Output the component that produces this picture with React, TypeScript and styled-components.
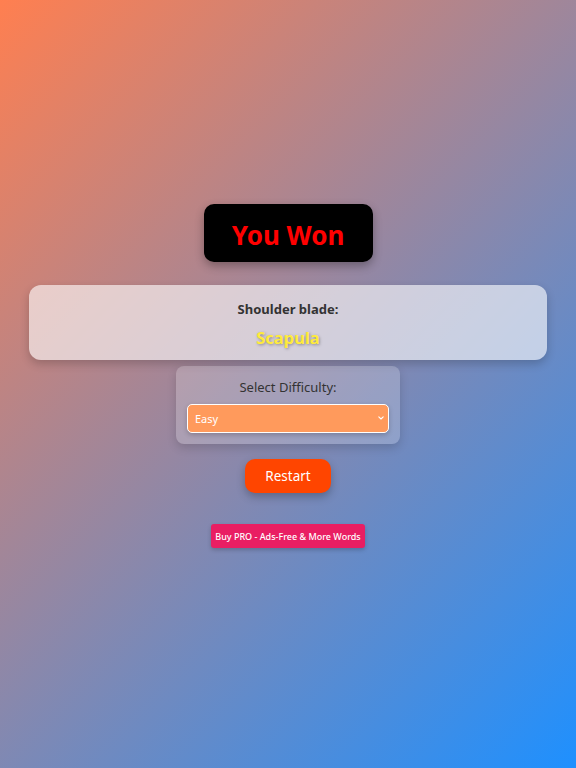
import React, { useState } from 'react';
import styled, { createGlobalStyle } from 'styled-components';

const GlobalStyle = createGlobalStyle`
  html, body {
    margin: 0;
    padding: 0;
  }
  body {
    font-family: "Noto Sans", "Open Sans", sans-serif;
    background: linear-gradient(135deg, #ff7f50 0%, #1e90ff 100%);
    min-height: 100vh;
  }
`;

const Page = styled.div`
  min-height: 100vh;
  display: flex;
  flex-direction: column;
  align-items: center;
  justify-content: center;
  padding-bottom: 16px;
  box-sizing: border-box;
`;

const Banner = styled.h1`
  margin: 0 0 23px;
  width: 169px;
  height: 58px;
  display: flex;
  align-items: center;
  justify-content: center;
  padding-top: 3px;
  box-sizing: border-box;
  background: #000;
  color: #ff0000;
  font-size: 26px;
  font-weight: 700;
  border-radius: 10px;
  box-shadow: 0 4px 10px rgba(0, 0, 0, 0.3);
`;

const WordCard = styled.div`
  width: 90%;
  height: 75px;
  box-sizing: border-box;
  padding-top: 3px;
  display: flex;
  flex-direction: column;
  align-items: center;
  justify-content: center;
  gap: 8px;
  background: rgba(255, 255, 255, 0.6);
  border-radius: 12px;
  box-shadow: 0 4px 10px rgba(0, 0, 0, 0.2);
  margin-bottom: 6px;
`;

const Hint = styled.div`
  font-size: 13px;
  font-weight: 700;
  color: #333;
`;

const Answer = styled.div`
  font-size: 16.5px;
  font-weight: 700;
  color: #ffeb3b;
  text-shadow: 1px 1px 3px rgba(0, 0, 0, 0.35);
`;

const DifficultyBox = styled.div`
  width: 224px;
  height: 78px;
  box-sizing: border-box;
  padding: 12px 11px 0;
  display: flex;
  flex-direction: column;
  align-items: center;
  gap: 8px;
  background: rgba(255, 255, 255, 0.2);
  border-radius: 8px;
  box-shadow: 0 4px 10px rgba(0, 0, 0, 0.15);
  margin-bottom: 15px;
`;

const Label = styled.label`
  font-size: 13px;
  color: #333;
`;

const SelectWrap = styled.div`
  position: relative;
  width: 100%;
`;

const Select = styled.select`
  display: block;
  width: 100%;
  height: 29px;
  padding: 0 7px;
  font-family: inherit;
  font-size: 11px;
  color: #fff;
  background: #ff9a5c;
  border: 1.5px solid #fff;
  border-radius: 5px;
  box-shadow: 0 2px 5px rgba(0, 0, 0, 0.2);
  outline: none;
  appearance: none;
  -webkit-appearance: none;
`;

const Chevron = styled.svg`
  position: absolute;
  right: 5px;
  top: 12px;
  width: 6px;
  height: 4px;
  pointer-events: none;
`;

const RestartButton = styled.button`
  width: 86px;
  height: 34px;
  font-family: inherit;
  font-size: 13.5px;
  color: #fff;
  background: #ff4500;
  border: none;
  border-radius: 10px;
  box-shadow: 0 4px 8px rgba(0, 0, 0, 0.25);
  cursor: pointer;
  margin-bottom: 31px;
`;

const ProButton = styled.button`
  width: 154px;
  height: 24px;
  padding: 0;
  font-family: inherit;
  font-size: 9px;
  font-weight: 500;
  color: #fff;
  background: #e91e63;
  border: none;
  border-radius: 3px;
  box-shadow: 0 2px 4px rgba(0, 0, 0, 0.2);
  cursor: pointer;
`;

export default function App() {
  const [level, setLevel] = useState('easy');
  return (
    <>
      <GlobalStyle />
      <Page>
        <Banner>You Won</Banner>
        <WordCard>
          <Hint>Shoulder blade:</Hint>
          <Answer>Scapula</Answer>
        </WordCard>
        <DifficultyBox>
          <Label htmlFor="difficulty">Select Difficulty:</Label>
          <SelectWrap>
            <Select id="difficulty" value={level} onChange={e => setLevel(e.target.value)}>
              <option value="easy">Easy</option>
              <option value="medium">Medium</option>
              <option value="hard">Hard</option>
            </Select>
            <Chevron viewBox="0 0 6 4">
              <path d="M0.8 0.8 L3 3 L5.2 0.8" fill="none" stroke="#fff" strokeWidth="1.1" strokeLinecap="round" strokeLinejoin="round" />
            </Chevron>
          </SelectWrap>
        </DifficultyBox>
        <RestartButton>Restart</RestartButton>
        <ProButton>Buy PRO - Ads-Free &amp; More Words</ProButton>
      </Page>
    </>
  );
}
